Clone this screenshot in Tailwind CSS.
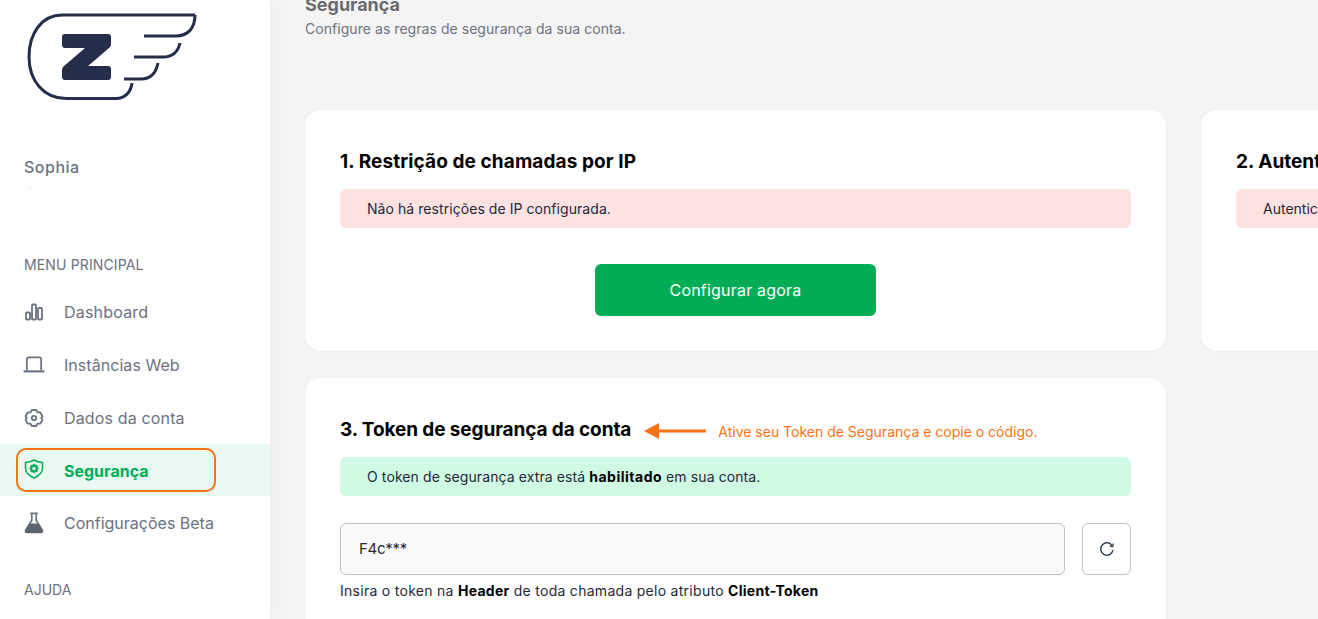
<!DOCTYPE html>
<html lang="pt-BR">
<head>
    <meta charset="UTF-8">
    <meta name="viewport" content="width=device-width, initial-scale=1.0">
    <title>Segurança</title>
    <script src="https://cdn.jsdelivr.net/npm/@tailwindcss/browser@4"></script>
</head>
<body class="h-screen overflow-hidden bg-[#f4f4f4] font-['Inter',sans-serif] text-black">
    <div class="flex h-full">
        <!-- Sidebar -->
        <aside class="relative z-10 w-[270px] shrink-0 bg-white h-full overflow-hidden shadow-[3px_0_24px_rgba(0,0,0,0.04)]">
            <svg class="ml-[26px] mt-[12px] block" width="174" height="90" viewBox="26 12 174 90" fill="none">
                <path d="M195 15H62C42 15 29 33 29 57C29 81 44 98.500 66 98.500H116C125 98.500 131 92 132 83" stroke="#252d4a" stroke-width="3"/>
                <path d="M195 15C195 28 188 36 176 36H144" stroke="#252d4a" stroke-width="3"/>
                <path d="M180 43C178 52 172 57 163 57H134" stroke="#252d4a" stroke-width="3"/>
                <path d="M158 63C156 73 150 79 141 79H124" stroke="#252d4a" stroke-width="3"/>
                <path d="M65 34H108C110 34 111 35 111 37V44C111 46 110 47 109 48L88 66H108C110 66 111 67 111 69V77C111 79 110 80 108 80H65C63 80 62 79 62 77V70C62 68 63 67 64 66L85 48H65C63 48 62 47 62 45V37C62 35 63 34 65 34Z" fill="#252d4a"/>
            </svg>

            <p class="ml-6 mt-[53px] text-base leading-6 font-medium tracking-[0.5px] text-[#6b7280]">Sophia</p>
            <p class="ml-[27px] h-0 mt-[4px] text-[10px] leading-[8px] text-[#e5e7eb]">···</p>

            <p class="ml-6 mt-[72px] text-sm leading-5 tracking-[0.14px] text-[#6b7280]">MENU PRINCIPAL</p>

            <nav class="mt-[10px] text-[#6b7280]">
                <a href="#" class="flex items-center h-[53px] pl-6 gap-[20px] text-base tracking-[0.2px]">
                    <svg class="w-5 h-5 shrink-0" viewBox="0 0 20 20" fill="none" stroke="#6b7280" stroke-width="1.800">
                        <rect x="2" y="10.500" width="4" height="7" rx="0.800"/>
                        <rect x="8" y="2.500" width="4" height="15" rx="0.800"/>
                        <rect x="14" y="6" width="4" height="11.500" rx="0.800"/>
                    </svg>
                    Dashboard
                </a>
                <a href="#" class="flex items-center h-[53px] pl-6 gap-[20px] text-base tracking-[0.05px]">
                    <svg class="w-5 h-5 shrink-0 scale-110" viewBox="0 0 20 20" fill="none" stroke="#6b7280" stroke-width="1.600">
                        <path d="M3.500 15V5C3.500 3.900 4.200 3 5.300 3H14.700C15.800 3 16.500 3.900 16.500 5V15"/>
                        <path d="M0.500 15.800H19.500" stroke-width="1.900"/>
                    </svg>
                    Instâncias Web
                </a>
                <a href="#" class="flex items-center h-[53px] pl-6 gap-[20px] text-base tracking-[0.15px]">
                    <svg class="w-5 h-5 shrink-0" viewBox="0 0 20 20" fill="none" stroke="#6b7280" stroke-width="1.800">
                        <path d="M7.800 2H12.200L13.500 4.300L16.300 4.500L18.500 8.200L17.200 10L18.500 11.800L16.300 15.500L13.500 15.700L12.200 18H7.800L6.500 15.700L3.700 15.500L1.500 11.800L2.800 10L1.500 8.200L3.700 4.500L6.500 4.300Z" stroke-linejoin="round"/>
                        <circle cx="10" cy="10" r="2.200"/>
                    </svg>
                    Dados da conta
                </a>
                <a href="#" class="flex items-center h-[52px] pt-[2px] pl-6 gap-[20px] text-base font-bold text-[#00ad56] bg-[#e8f9f1]">
                    <svg class="w-5 h-5 shrink-0 -mt-[4px]" viewBox="0 0 20 20" fill="none" stroke="#00ad56" stroke-width="1.500">
                        <path d="M10 1C12.500 2.500 15 3.300 18.500 3.400V9.500C18.500 14 14.500 17 10 19C5.500 17 1.500 14 1.500 9.500V3.400C5 3.300 7.500 2.500 10 1Z" stroke-linejoin="round"/>
                        <circle cx="10" cy="9.500" r="2.800" stroke-width="2.200"/>
                        <path d="M10 4.800V6M10 13V14.200M5.300 9.500H6.500M13.500 9.500H14.700M6.700 6.200L7.600 7.100M12.400 11.900L13.300 12.800M13.300 6.200L12.400 7.100M7.600 11.900L6.700 12.800" stroke-width="1.500"/>
                    </svg>
                    Segurança
                </a>
                <a href="#" class="flex items-center h-[53px] pl-6 gap-[20px] text-base">
                    <svg class="w-5 h-5 shrink-0 scale-110" viewBox="0 0 20 20" fill="none">
                        <path d="M6.500 1.200H13.500M8 1.200V7.500L2.500 16.500C2 17.500 2.700 18.500 3.700 18.500H16.300C17.300 18.500 18 17.500 17.500 16.500L12 7.500V1.200" stroke="#6b7280" stroke-width="1.500"/>
                        <path d="M5.500 10.500H14.500L18.300 17C18.600 18 17.800 19 16.800 19H3.200C2.200 19 1.400 18 1.700 17Z" fill="#5f6570"/>
                    </svg>
                    Configurações Beta
                </a>
            </nav>

            <p class="ml-6 mt-[31px] text-sm leading-5 text-[#6b7280]">AJUDA</p>
        </aside>

        <!-- Conteúdo -->
        <main class="flex-1 min-w-0 overflow-hidden pl-[35px] relative">
            <header class="-mt-[7px]">
                <h1 class="text-[18px] leading-6 font-bold text-[#6b6b6b] -mb-[1px]">Segurança</h1>
                <p class="mt-[3px] text-sm leading-5 tracking-[0.05px] text-[#6b7280]">Configure as regras de segurança da sua conta.</p>
            </header>

            <div class="mt-[71px] w-[1200px] grid grid-cols-[861px_861px] gap-x-[35px] gap-y-[27px]">
                <section class="bg-white rounded-2xl h-[241px] px-[35px] pt-[40px] shadow-[0_1px_3px_rgba(0,0,0,0.03)]">
                    <h2 class="text-[19px] leading-6 font-bold tracking-[0.1px]">1. Restrição de chamadas por IP</h2>
                    <div class="mt-[15px] h-[39px] flex items-center rounded-md bg-[#fee2e2] px-[27px] text-sm tracking-[0.06px] text-[#1f2937]">Não há restrições de IP configurada.</div>
                    <div class="mt-[36px] flex justify-center">
                        <button class="w-[281px] h-[52px] rounded-md bg-[#00ad56] text-white text-base font-normal tracking-[0.2px]">Configurar agora</button>
                    </div>
                </section>

                <section class="bg-white rounded-2xl h-[241px] px-[35px] pt-[40px] shadow-[0_1px_3px_rgba(0,0,0,0.03)]">
                    <h2 class="text-[19px] leading-6 font-bold whitespace-nowrap">2. Autenticação de dois fatores</h2>
                    <div class="mt-[15px] h-[39px] flex items-center rounded-md bg-[#fee2e2] px-[27px] text-sm text-[#1f2937]">Autenticação de dois fatores não configurada.</div>
                </section>

                <section class="bg-white rounded-2xl h-[300px] px-[35px] pt-[40px] shadow-[0_1px_3px_rgba(0,0,0,0.03)]">
                    <div class="flex items-center">
                        <h2 class="text-[19px] leading-6 font-bold tracking-[-0.1px]">3. Token de segurança da conta</h2>
                        <svg class="ml-[13px] mt-[1px]" width="62" height="18" viewBox="0 0 62 18">
                            <path d="M0 9L15 1V7.500H62V10.500H15V17Z" fill="#f97316"/>
                        </svg>
                        <span class="ml-[12px] mt-[3px] text-[14px] text-[#f97316]">Ative seu Token de Segurança e copie o código.</span>
                    </div>
                    <div class="mt-[15px] h-[39px] flex items-center rounded-md bg-[#d1fae5] px-[27px] text-sm tracking-[0.1px] text-[#1f2937]">
                        <span>O token de segurança extra está <b class="font-bold tracking-[0.5px] text-black">habilitado</b> em sua conta.</span>
                    </div>
                    <div class="mt-[27px] flex gap-[17px]">
                        <div class="flex-1 h-[52px] flex items-center rounded-md border-[1.5px] border-[#bcc0cd] bg-[#fafafa] px-[18px] text-[15px] tracking-[-0.3px] text-[#1f2937]">F4c***</div>
                        <button class="w-[49px] h-[52px] flex items-center justify-center rounded-md border-[1.5px] border-[#bcc0cd] bg-white">
                            <svg width="16" height="16" viewBox="0 0 16 16" fill="none" stroke="#374151" stroke-width="1.500">
                                <path d="M13.300 5A6.200 6.200 0 1 0 14 9"/>
                                <path d="M14.200 2.500L13.800 5.600L10.800 5" stroke-width="1.300"/>
                            </svg>
                        </button>
                    </div>
                    <p class="mt-[6px] text-sm leading-5 tracking-[0.28px] text-[#1f2937]">Insira o token na <b class="font-bold text-black">Header</b> de toda chamada pelo atributo <b class="font-bold text-black">Client-Token</b></p>
                </section>
            </div>
        </main>
    </div>

    <!-- Destaque laranja do item ativo -->
    <div class="absolute z-20 left-[16px] top-[448px] w-[200px] h-[44px] rounded-[10px] border-2 border-[#f97316]"></div>
</body>
</html>
